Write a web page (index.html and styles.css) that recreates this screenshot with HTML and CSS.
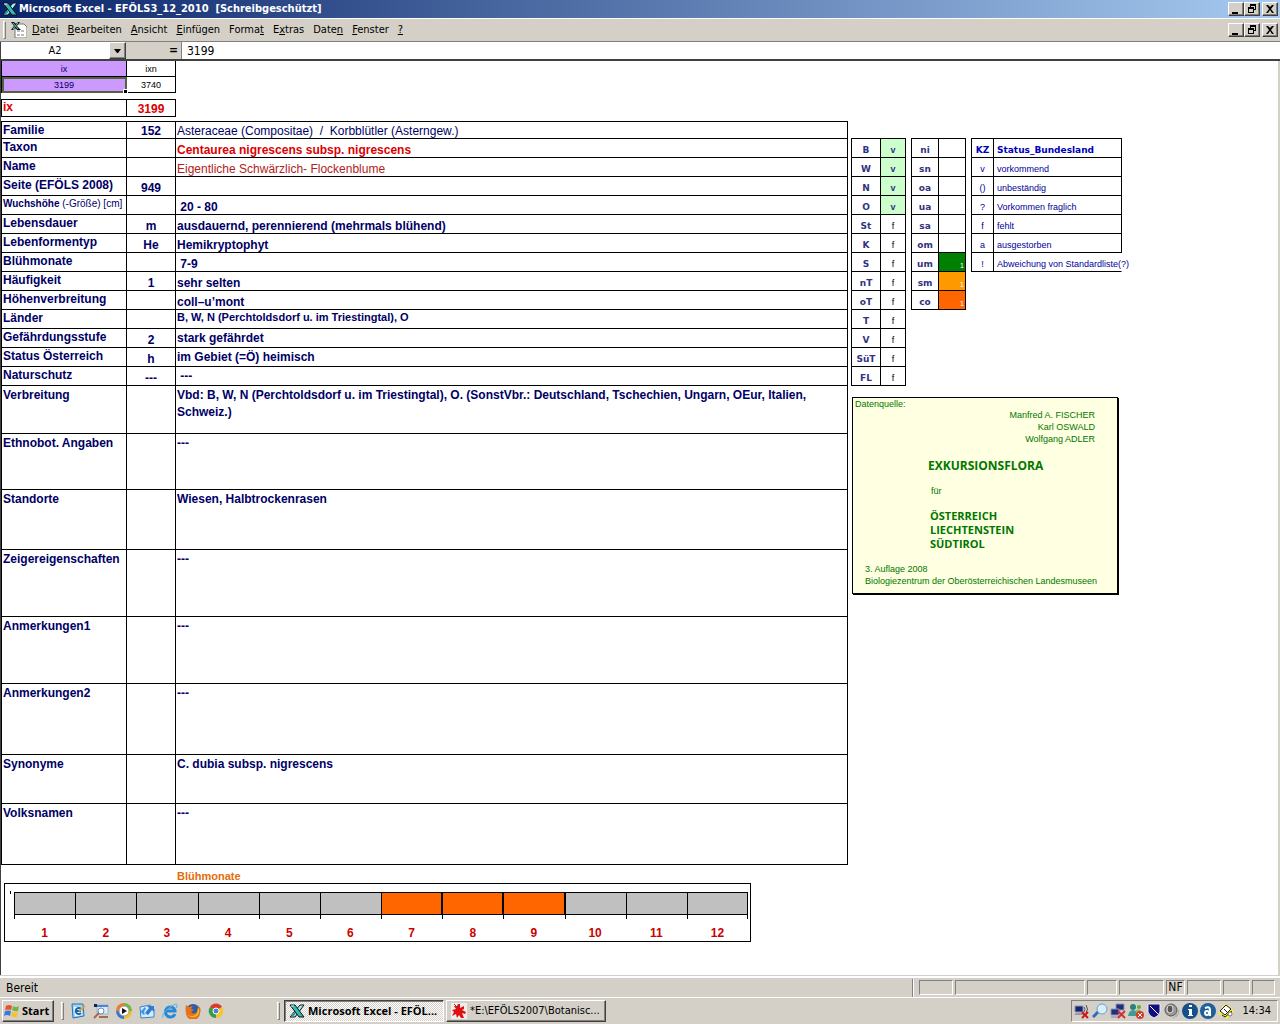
FILE: index.html
```
<!DOCTYPE html>

<html lang="de">
    <head>
        <meta charset="utf-8">
        <title>Microsoft Excel - EFÖLS3_12_2010</title>

        <link rel="stylesheet" href="styles.css">

    </head>

    <body>
        <svg class="defs" aria-hidden="true">
            <symbol id="excel" viewBox="0 0 16 16">
                <path d="M11 2h4L6 14H1z" fill="#a8ecec" stroke="#111"/>
                <path d="M1 2h5l9 12h-5z" fill="#35b8b8" stroke="#111"/>
                <path d="M2 3h3" stroke="#d9f7f7"/>
                <path d="M3 13l3-3" stroke="#1f9c9c" stroke-width="2"/>
            </symbol>
            <symbol id="min" viewBox="0 0 12 10">
                <path d="M2 8h6v2H2z"/>
            </symbol>
            <symbol id="restore" viewBox="0 0 12 10">
                <path d="M4 0h6v6H8V5h1V2H5v1H4zM2 3h6v6H2zM3 5v3h4V5z" fill-rule="evenodd"/>
            </symbol>
            <symbol id="close" viewBox="0 0 12 10">
                <path d="M2 1h2l2 2 2-2h2L7 5l3 4H8L6 6 4 9H2l3-4z"/>
            </symbol>
        </svg>

        <header class="titlebar">
            <svg class="icon"><use href="#excel"/></svg>
            <h1>Microsoft Excel - EFÖLS3_12_2010&nbsp; [Schreibgeschützt]</h1>
            <div class="winbuttons">
                <button aria-label="Minimieren"><svg><use href="#min"/></svg></button>
                <button aria-label="Wiederherstellen"><svg><use href="#restore"/></svg></button>
                <button aria-label="Schließen"><svg><use href="#close"/></svg></button>
            </div>
        </header>

        <nav class="menubar">
            <span class="grip"></span>
            <svg class="icon" viewBox="0 0 16 16">
                <path d="M4 2h9l3 3v11H4z" fill="#fff" stroke="#777"/>
                <path d="M6 8h3v2H6zm4 0h3v2h-3zm-4 4h3v2H6zm4 0h3v2h-3z" fill="#bbb"/>
                <path d="M0 0h3l2 2 2-2h2L6 4l4 4H6L4 6 2 8H0l3-4z" fill="#111"/>
                <path d="M2 1l5 6M7 1L2 7" stroke="#4cc" fill="none"/>
            </svg>
            <a href="#"><u>D</u>atei</a>
            <a href="#"><u>B</u>earbeiten</a>
            <a href="#"><u>A</u>nsicht</a>
            <a href="#"><u>E</u>infügen</a>
            <a href="#">Forma<u>t</u></a>
            <a href="#">E<u>x</u>tras</a>
            <a href="#">Date<u>n</u></a>
            <a href="#"><u>F</u>enster</a>
            <a href="#"><u>?</u></a>
            <div class="winbuttons">
                <button aria-label="Mappe minimieren"><svg><use href="#min"/></svg></button>
                <button aria-label="Mappe wiederherstellen"><svg><use href="#restore"/></svg></button>
                <button aria-label="Mappe schließen"><svg><use href="#close"/></svg></button>
            </div>
        </nav>

        <div class="formulabar">
            <input class="namebox" type="text" value="A2" aria-label="Namenfeld">
            <button class="drop" aria-label="Namen anzeigen"><svg viewBox="0 0 7 4"><path d="M0 0h7L4 4H3z"/></svg></button>
            <span class="equals">=</span>
            <input class="formula" type="text" value="3199" aria-label="Bearbeitungsleiste">
        </div>

        <main class="sheet">
            <section class="left">
                <table class="grid index">
                    <tr><td class="lilac">ix</td><td>ixn</td></tr>
                    <tr><td class="lilac active">3199<span class="handle"></span></td><td>3740</td></tr>
                </table>

                <table class="grid number">
                    <tr><th>ix</th><td>3199</td></tr>
                </table>

                <table class="grid data">
                    <colgroup><col class="c1"><col class="c2"><col></colgroup>
                    <tr class="first"><th>Familie</th><td>152</td><td class="plain">Asteraceae (Compositae)&nbsp; /&nbsp; Korbblütler (Asterngew.)</td></tr>
                    <tr><th>Taxon</th><td></td><td class="taxon">Centaurea nigrescens subsp. nigrescens</td></tr>
                    <tr><th>Name</th><td></td><td class="name">Eigentliche Schwärzlich- Flockenblume</td></tr>
                    <tr><th>Seite (EFÖLS 2008)</th><td>949</td><td></td></tr>
                    <tr><th class="size"><b>Wuchshöhe</b> (-Größe) [cm]</th><td></td><td>&nbsp;20 - 80</td></tr>
                    <tr><th>Lebensdauer</th><td>m</td><td>ausdauernd, perennierend (mehrmals blühend)</td></tr>
                    <tr><th>Lebenformentyp</th><td>He</td><td>Hemikryptophyt</td></tr>
                    <tr><th>Blühmonate</th><td></td><td>&nbsp;7-9</td></tr>
                    <tr><th>Häufigkeit</th><td>1</td><td>sehr selten</td></tr>
                    <tr><th>Höhenverbreitung</th><td></td><td>coll–u’mont</td></tr>
                    <tr><th>Länder</th><td></td><td class="states">B, W, N (Perchtoldsdorf u. im Triestingtal), O</td></tr>
                    <tr><th>Gefährdungsstufe</th><td>2</td><td class="mid">stark gefährdet</td></tr>
                    <tr><th>Status Österreich</th><td>h</td><td class="mid">im Gebiet (=Ö) heimisch</td></tr>
                    <tr><th>Naturschutz</th><td>---</td><td class="mid">&nbsp;---</td></tr>
                    <tr class="tall h48"><th>Verbreitung</th><td></td><td>Vbd: B, W, N (Perchtoldsdorf u. im Triestingtal), O. (SonstVbr.: Deutschland, Tschechien, Ungarn, OEur, Italien, Schweiz.)</td></tr>
                    <tr class="tall h56"><th>Ethnobot. Angaben</th><td></td><td>---</td></tr>
                    <tr class="tall h60"><th>Standorte</th><td></td><td>Wiesen, Halbtrockenrasen</td></tr>
                    <tr class="tall h67"><th>Zeigereigenschaften</th><td></td><td>---</td></tr>
                    <tr class="tall h67"><th>Anmerkungen1</th><td></td><td>---</td></tr>
                    <tr class="tall h71"><th>Anmerkungen2</th><td></td><td>---</td></tr>
                    <tr class="tall h49"><th>Synonyme</th><td></td><td>C. dubia subsp. nigrescens</td></tr>
                    <tr class="tall h61"><th>Volksnamen</th><td></td><td>---</td></tr>
                </table>

                <h2>Blühmonate</h2>
                <div class="chart">
                    <div class="month"><i></i>1</div>
                    <div class="month"><i></i>2</div>
                    <div class="month"><i></i>3</div>
                    <div class="month"><i></i>4</div>
                    <div class="month"><i></i>5</div>
                    <div class="month"><i></i>6</div>
                    <div class="month bloom"><i></i>7</div>
                    <div class="month bloom"><i></i>8</div>
                    <div class="month bloom"><i></i>9</div>
                    <div class="month"><i></i>10</div>
                    <div class="month"><i></i>11</div>
                    <div class="month"><i></i>12</div>
                </div>
            </section>

            <aside class="right">
                <div class="tables">
                    <table class="grid small lands">
                        <tr><th>B</th><td class="yes">v</td></tr>
                        <tr><th>W</th><td class="yes">v</td></tr>
                        <tr><th>N</th><td class="yes">v</td></tr>
                        <tr><th>O</th><td class="yes">v</td></tr>
                        <tr><th>St</th><td>f</td></tr>
                        <tr><th>K</th><td>f</td></tr>
                        <tr><th>S</th><td>f</td></tr>
                        <tr><th>nT</th><td>f</td></tr>
                        <tr><th>oT</th><td>f</td></tr>
                        <tr><th>T</th><td>f</td></tr>
                        <tr><th>V</th><td>f</td></tr>
                        <tr><th>SüT</th><td>f</td></tr>
                        <tr><th>FL</th><td>f</td></tr>
                    </table>

                    <table class="grid small levels">
                        <tr><th>ni</th><td></td></tr>
                        <tr><th>sn</th><td></td></tr>
                        <tr><th>oa</th><td></td></tr>
                        <tr><th>ua</th><td></td></tr>
                        <tr><th>sa</th><td></td></tr>
                        <tr><th>om</th><td></td></tr>
                        <tr><th>um</th><td class="green">1</td></tr>
                        <tr><th>sm</th><td class="amber">1</td></tr>
                        <tr><th>co</th><td class="orange">1</td></tr>
                    </table>

                    <table class="grid small legend">
                        <tr><th>KZ</th><th>Status_Bundesland</th></tr>
                        <tr><td>v</td><td>vorkommend</td></tr>
                        <tr><td>()</td><td>unbeständig</td></tr>
                        <tr><td>?</td><td>Vorkommen fraglich</td></tr>
                        <tr><td>f</td><td>fehlt</td></tr>
                        <tr><td>a</td><td>ausgestorben</td></tr>
                        <tr><td>!</td><td>Abweichung von Standardliste(?)</td></tr>
                    </table>
                </div>

                <div class="source">
                    <p class="caption">Datenquelle:</p>
                    <p class="authors">Manfred A. FISCHER<br>Karl OSWALD<br>Wolfgang ADLER</p>
                    <p class="flora">EXKURSIONSFLORA</p>
                    <p class="for">für</p>
                    <p class="countries">ÖSTERREICH<br>LIECHTENSTEIN<br>SÜDTIROL</p>
                    <p class="edition">3. Auflage 2008<br>Biologiezentrum der Oberösterreichischen Landesmuseen</p>
                </div>
            </aside>
        </main>

        <footer class="statusbar">
            <span class="ready">Bereit</span>
            <span class="divider"></span>
            <span class="panel w34"></span>
            <span class="panel w130"></span>
            <span class="panel w30"></span>
            <span class="panel w45"></span>
            <span class="panel w19">NF</span>
            <span class="panel w34"></span>
            <span class="panel w27"></span>
            <span class="panel w23"></span>
        </footer>

        <div class="taskbar">
            <button class="start">
                <svg class="icon" viewBox="0 0 16 16">
                    <path d="M2 3q3-2 6 0L7 7Q4 6 1 7z" fill="#e5532d"/>
                    <path d="M9 3q3 2 6 0l-1 5q-3 1-6-1z" fill="#6fb93c"/>
                    <path d="M1 8q3-1 6 0l-1 5q-3-2-6 0z" fill="#3d78d8"/>
                    <path d="M8 9q3 1 6 0l-1 5q-3 1-6-1z" fill="#f6c22c"/>
                </svg>
                Start
            </button>
            <span class="grip"></span>
            <div class="quick">
                <svg class="icon" viewBox="0 0 16 16">
                    <path d="M2 1h11l1 12-11 2z" fill="#9cd4f6" stroke="#2173b8"/>
                    <path d="M4 4h7l1 8-7 1z" fill="#fff"/>
                    <path d="M11 6a3 3 0 1 0 0 4M6 8h5" fill="none" stroke="#1767ad" stroke-width="2"/>
                    <path d="M9 8l6-5" stroke="#e0a13c" stroke-width="2"/>
                </svg>
                <svg class="icon" viewBox="0 0 16 16">
                    <path d="M4 2h11v9H4z" fill="#dcecfa" stroke="#8eb4dc"/>
                    <path d="M4 3h11" stroke="#4a87d0" stroke-width="2"/>
                    <path d="M1 1h3v3H1z" fill="#124"/>
                    <circle cx="8" cy="8" r="3" fill="#fff" stroke="#6b8ab0"/>
                    <path d="M6 10l-5 5M6 14h9" stroke="#a76a4c" stroke-width="2"/>
                </svg>
                <svg class="icon" viewBox="0 0 16 16">
                    <path d="M8 8V0a8 8 0 0 1 8 8z" fill="#6fb93c"/>
                    <path d="M8 8h8a8 8 0 0 1-8 8z" fill="#f3bd27"/>
                    <path d="M8 8v8a8 8 0 0 1-8-8z" fill="#3776cf"/>
                    <path d="M8 8H0a8 8 0 0 1 8-8z" fill="#ee7a2a"/>
                    <circle cx="8" cy="8" r="5" fill="#fff" stroke="#999"/>
                    <path d="M6 5l5 3-5 3z" fill="#111"/>
                </svg>
                <svg class="icon" viewBox="0 0 16 16">
                    <path d="M1 4l10-2 4 4v8L2 15z" fill="#d4ebfb" stroke="#3b83c4"/>
                    <path d="M15 3v6l-2-2-4 5-3-2 4-5-2-2z" fill="#2b7dd6"/>
                    <path d="M2 8l4-4 1 2q-3 2-1 6-4-1-4-4z" fill="#3f97e6"/>
                </svg>
                <svg class="icon" viewBox="0 0 16 16">
                    <path d="M13 11a5 5 0 1 1 0-4v1H5" fill="none" stroke="#2789d8" stroke-width="3"/>
                    <path d="M1 15Q-1 11 7 5t8-3q1 2-2 4" fill="none" stroke="#54b5ef"/>
                </svg>
                <svg class="icon" viewBox="0 0 16 16">
                    <circle cx="8" cy="8" r="7" fill="#2c5ea8"/>
                    <path d="M1 2l3 2 4-1-2 3 3 1-3 2q3 3 6 0t1-7q4 4 2 8a7 7 0 0 1-14 0Q0 6 1 2z" fill="#e8721c"/>
                    <path d="M13 4q3 5-1 9-5 3-9-1 6 3 9-2z" fill="#f8b42b"/>
                </svg>
                <svg class="icon" viewBox="0 0 16 16">
                    <path d="M8 8L2 4a7 7 0 0 1 12 0z" fill="#d93a2b"/>
                    <path d="M8 8l6-4a7 7 0 0 1-6 11z" fill="#f5c62c"/>
                    <path d="M8 8v7A7 7 0 0 1 2 4z" fill="#3a9c45"/>
                    <circle cx="8" cy="8" r="3" fill="#4284e8" stroke="#fff"/>
                </svg>
            </div>
            <span class="grip"></span>
            <button class="task pressed"><svg class="icon"><use href="#excel"/></svg>Microsoft Excel - EFÖL...</button>
            <button class="task">
                <svg class="icon" viewBox="0 0 16 16">
                    <path d="M0 0h16v16H0z" fill="#eee"/>
                    <path d="M7 1h2v4l4-2v3l-2 1 4 2-1 2-3-1 2 5h-3l-2-3-2 3-1-4-4 2 2-4-2-2 4-1-2-3h3z" fill="#e01010"/>
                    <path d="M3 1l3 3" stroke="#833"/>
                </svg>
                *E:\EFÖLS2007\Botanisc...
            </button>
            <div class="tray">
                <svg class="icon" viewBox="0 0 16 16">
                    <path d="M1 3h8v6H1z" fill="#16246c" stroke="#8a94b8"/>
                    <path d="M0 12l2-2h7l1 2z" fill="#99a"/>
                    <path d="M10 4q2 2 0 5M12 2q3 4 0 8" fill="none" stroke="#555"/>
                    <path d="M8 9l6 6M14 9l-6 6" stroke="#d01818" stroke-width="2"/>
                </svg>
                <svg class="icon" viewBox="0 0 16 16">
                    <path d="M1 14l6-6" stroke="#3266c8" stroke-width="3"/>
                    <circle cx="10" cy="6" r="5" fill="#d6effc" stroke="#6f9cc9"/>
                </svg>
                <svg class="icon" viewBox="0 0 16 16">
                    <path d="M6 1h8v6H6z" fill="#20307c" stroke="#8a94b8"/>
                    <path d="M1 6h8v6H1z" fill="#20307c" stroke="#8a94b8"/>
                    <path d="M1 14h8" stroke="#889"/>
                    <path d="M8 8l7 7M15 8l-7 7" stroke="#d83030" stroke-width="2"/>
                </svg>
                <svg class="icon" viewBox="0 0 16 16">
                    <circle cx="5" cy="4" r="3" fill="#2f7f7a"/>
                    <circle cx="11" cy="4" r="2" fill="#5fae3f"/>
                    <path d="M0 13q1-6 5-6t5 6z" fill="#3f9c96"/>
                    <path d="M8 7q5-2 6 4H9z" fill="#7cc04e"/>
                    <circle cx="12" cy="12" r="4" fill="#d83a2a"/>
                    <path d="M10 10l4 4M14 10l-4 4" stroke="#fff"/>
                </svg>
                <svg class="icon" viewBox="0 0 16 16">
                    <path d="M2 1h12v8q-1 4-6 6-5-2-6-6z" fill="#10107c" stroke="#e8e8f4"/>
                    <path d="M4 3l8 8" stroke="#fff"/>
                </svg>
                <svg class="icon" viewBox="0 0 16 16">
                    <ellipse cx="7" cy="7" rx="6" ry="6" fill="#999" stroke="#555"/>
                    <ellipse cx="6" cy="6" rx="3" ry="4" fill="#555" stroke="#ddd"/>
                    <path d="M12 14q3-3 3-7M9 15q3-1 4-4" fill="none" stroke="#9ab"/>
                </svg>
                <svg class="icon" viewBox="0 0 16 16">
                    <circle cx="8" cy="8" r="8" fill="#14508c"/>
                    <path d="M7 2h3v2H7zM6 6h4v6h1v1H6v-1h1V7H6z" fill="#fff"/>
                </svg>
                <svg class="icon" viewBox="0 0 16 16">
                    <circle cx="8" cy="8" r="8" fill="#1f5f9c"/>
                    <ellipse cx="7" cy="10" rx="2" ry="2" fill="none" stroke="#fff" stroke-width="2"/>
                    <path d="M5 5q5-2 5 2v6" fill="none" stroke="#fff" stroke-width="2"/>
                </svg>
                <svg class="icon" viewBox="0 0 16 16">
                    <path d="M8 0l8 8-7 8-9-6z" fill="#f4ee3c"/>
                    <path d="M2 8l6-6 5 4-6 6z" fill="#fff" stroke="#222"/>
                    <path d="M4 12l3 2 7-6M6 6l3 3" stroke="#222" fill="none"/>
                    <circle cx="12" cy="11" r="2" fill="#fff" stroke="#776"/>
                </svg>
                <time>14:34</time>
            </div>
        </div>
    </body>
</html>
```
FILE: styles.css
```
* {
    box-sizing: border-box;
}

body {
    margin: 0;
    min-height: 100vh;
    display: flex;
    flex-direction: column;
    background: #d4d0c8;
    color: #000;
    font: 11px/14px "DejaVu Sans Condensed", Tahoma, sans-serif;
}

h1, h2, p {
    margin: 0;
}

button, input {
    font: inherit;
    color: inherit;
    padding: 0;
    border: 0;
    border-radius: 0;
}

.defs {
    display: none;
}

.icon {
    width: 16px;
    height: 16px;
    flex: none;
}

/* title and menu */

.titlebar {
    display: flex;
    align-items: center;
    gap: 1px;
    height: 18px;
    padding: 0 2px;
    background: linear-gradient(to right, #0a246a, #a6caf0);
    color: #fff;
}

.titlebar h1 {
    font-size: 11px;
    line-height: 14px;
    white-space: nowrap;
}

.winbuttons {
    display: flex;
    margin-left: auto;
}

.winbuttons button {
    width: 16px;
    height: 14px;
    display: flex;
    justify-content: center;
    align-items: center;
    background: #d4d0c8;
    border: 1px solid;
    border-color: #fff #404040 #404040 #fff;
    box-shadow: inset -1px -1px #808080;
}

.winbuttons button:last-child {
    margin-left: 2px;
}

.winbuttons svg {
    width: 12px;
    height: 10px;
}

.menubar {
    display: flex;
    align-items: center;
    gap: 9px;
    height: 24px;
    padding: 0 2px 0 3px;
    border-top: 1px solid #fff;
    border-bottom: 1px solid #808080;
}

.menubar .icon {
    margin: 0 -4px;
}

.menubar a {
    color: #000;
    text-decoration: none;
}

.grip {
    width: 3px;
    height: 18px;
    border: 1px solid;
    border-color: #fff #808080 #808080 #fff;
}

.formulabar {
    display: flex;
    height: 19px;
    border-bottom: 2px solid #404040;
}

.namebox {
    width: 109px;
    border-left: 1px solid #404040;
    text-align: center;
    background: #fff;
}

.drop {
    width: 17px;
    background: #d4d0c8;
    border: 1px solid;
    border-color: #fff #404040 #404040 #fff;
    box-shadow: inset -1px -1px #808080;
}

.drop svg {
    width: 7px;
    height: 4px;
    display: block;
    margin: 0 auto;
}

.equals {
    width: 56px;
    padding-right: 3px;
    border-right: 1px solid #808080;
    text-align: right;
    font-size: 12px;
    font-weight: bold;
    line-height: 17px;
}

.formula {
    flex: 1;
    padding-left: 5px;
    background: #fff;
    font-size: 12px;
}

/* worksheet */

.sheet {
    flex: 1;
    display: flex;
    align-items: flex-start;
    margin-right: 1px;
    border-left: 1px solid #404040;
    border-right: 1px solid #d4d0c8;
    background: #fff;
    color: #000066;
    font: bold 12px/14px "Liberation Sans", Arial, sans-serif;
}

.left {
    flex: 1;
    min-width: 0;
}

.right {
    flex: none;
    width: 430px;
    padding: 77px 0 0 3px;
}

.grid {
    border-spacing: 0;
    border-top: 1px solid #000;
    border-left: 1px solid #000;
    table-layout: fixed;
}

.grid td, .grid th {
    height: 19px;
    padding: 0 1px;
    border-right: 1px solid #000;
    border-bottom: 1px solid #000;
    vertical-align: bottom;
}

.index, .number {
    width: 175px;
}

.index td:first-child, .number th {
    width: 125px;
}

.index {
    border-top: 0;
    color: #000;
    font: 9px/14px "Liberation Sans", Arial, sans-serif;
}

.index td {
    height: 16px;
    text-align: center;
    vertical-align: middle;
}

.index .lilac {
    background: #cc99ff;
    color: #000066;
}

.index .active {
    position: relative;
    outline: 2px solid #556044;
    outline-offset: -2px;
}

.handle {
    position: absolute;
    right: -2px;
    bottom: -2px;
    width: 5px;
    height: 5px;
    background: #000;
    border: 1px solid #fff;
}

.number {
    margin: 6px 0 4px;
    color: #dd0000;
}

.grid.number th, .grid.number td {
    height: 17px;
}

.grid.number th {
    text-align: left;
    vertical-align: top;
}

.number td {
    text-align: center;
}

.data {
    width: 100%;
}

.c1 {
    width: 125px;
}

.c2 {
    width: 49px;
}

.grid.data th {
    text-align: left;
    vertical-align: top;
    line-height: 16px;
    white-space: nowrap;
}

.data td:nth-child(2) {
    text-align: center;
}

.data .first td, .data .first th {
    height: 17px;
}

.data .plain, .data .name {
    font-weight: normal;
}

.data .taxon {
    color: #dd0000;
}

.data .name {
    color: #b22222;
}

.data .size {
    font-size: 10px;
    font-weight: normal;
}

.data .states {
    vertical-align: top;
    font-size: 11px;
}

.data .mid {
    vertical-align: middle;
}

.grid.data .tall th, .grid.data .tall td {
    padding-top: 1px;
    vertical-align: top;
    line-height: 17px;
}

.data .h48 td { height: 48px; }
.data .h49 td { height: 49px; }
.data .h56 td { height: 56px; }
.data .h60 td { height: 60px; }
.data .h61 td { height: 61px; }
.data .h67 td { height: 67px; }
.data .h71 td { height: 71px; }

h2 {
    margin: 4px 0 0 176px;
    color: #e46c0a;
    font-size: 11px;
    line-height: 14px;
}

.chart {
    position: relative;
    display: grid;
    grid-template-columns: repeat(12, 1fr);
    height: 59px;
    margin: 0 97px 0 3px;
    padding: 8px 2px 0 9px;
    border: 1px solid #000;
    color: #cc0000;
    text-align: center;
}

/* stub of the hidden value axis */
.chart::before {
    content: "";
    position: absolute;
    left: 5px;
    top: 7px;
    width: 1px;
    height: 3px;
    background: #000;
}

.month i {
    display: block;
    height: 27px;
    margin-bottom: 7px;
    border-left: 1px solid #000;
    background: linear-gradient(#000 1px, #c0c0c0 1px, #c0c0c0 22px, #000 22px, #000 23px, transparent 23px);
}

.month:last-child i {
    border-right: 1px solid #000;
}

.bloom i {
    background: linear-gradient(#000 1px, #ff6600 1px, #ff6600 22px, #000 22px, #000 23px, transparent 23px);
}

.bloom i::after {
    content: "";
    display: block;
    height: 23px;
    border-right: 1px solid #000;
}

/* side tables */

.tables {
    display: flex;
    align-items: flex-start;
    gap: 5px;
}

.small {
    font-size: 9px;
    line-height: 14px;
}

.small td, .small th {
    padding: 0;
    text-align: center;
    white-space: nowrap;
}

.small th {
    color: #333380;
    font-family: "DejaVu Sans", Verdana, sans-serif;
}

.small td {
    font-weight: normal;
}

.lands {
    width: 55px;
    color: #000;
}

.lands th {
    width: 29px;
}

.lands .yes {
    background: #ccffcc;
    color: #333380;
    font-weight: bold;
}

.levels {
    width: 55px;
}

.levels th {
    width: 27px;
}

.levels td {
    padding-right: 1px;
    color: #fff;
    font-size: 7px;
    line-height: 10px;
    text-align: right;
}

.green { background: #008000; }
.amber { background: #ff9900; }
.orange { background: #ff6600; }

.legend {
    width: 151px;
    color: #000099;
}

.legend th {
    color: #0000bb;
}

.legend th:first-child {
    width: 22px;
}

.legend tr > :last-child {
    padding-left: 3px;
    text-align: left;
}

.legend tr:last-child td:last-child {
    border-right-color: transparent;
}

.source {
    width: 266px;
    margin: 11px 0 0 1px;
    padding: 1px 2px 6px;
    border: 1px solid #000;
    box-shadow: 1px 1px #000;
    background: #ffffe1;
    color: #007700;
    font: 9px/12px "Liberation Sans", Arial, sans-serif;
}

.caption {
    line-height: 10px;
}

.authors {
    margin-right: 20px;
    text-align: right;
}

.flora {
    margin: 13px 0 11px 73px;
    font: bold 12px/16px "Open Sans", Tahoma, sans-serif;
}

.for {
    margin-left: 76px;
}

.countries {
    margin: 12px 0 12px 75px;
    font: bold 11px/14px "Open Sans", Tahoma, sans-serif;
}

.edition {
    margin-left: 10px;
    white-space: nowrap;
}

/* status bar and taskbar */

.statusbar {
    display: flex;
    align-items: center;
    gap: 2px;
    height: 22px;
    padding: 3px 5px 1px 6px;
    border-top: 1px solid #d4d0c8;
    box-shadow: inset 0 2px #fff;
    font-size: 12px;
}

.ready {
    flex: 1;
}

.divider {
    width: 2px;
    height: 18px;
    margin-right: 3px;
    border-left: 1px solid #808080;
    border-right: 1px solid #fff;
}

.panel {
    height: 15px;
    border: 1px solid;
    border-color: #808080 #fff #fff #808080;
    line-height: 13px;
    text-align: center;
}

.w19 { width: 19px; }
.w23 { width: 23px; }
.w27 { width: 27px; }
.w30 { width: 30px; }
.w34 { width: 34px; }
.w45 { width: 45px; }
.w130 { width: 130px; }

.taskbar {
    display: flex;
    align-items: center;
    height: 27px;
    padding: 0 2px;
    border-top: 1px solid #fff;
}

.start, .task {
    display: flex;
    align-items: center;
    height: 22px;
    background: #d4d0c8;
    border: 1px solid;
    border-color: #fff #404040 #404040 #fff;
    box-shadow: inset -1px -1px #808080;
    white-space: nowrap;
}

.start {
    gap: 2px;
    width: 52px;
    margin-right: 7px;
    padding-left: 1px;
    font: bold 11px/14px "Open Sans", Tahoma, sans-serif;
}

.quick {
    display: flex;
    gap: 7px;
    width: 207px;
    margin-left: 6px;
}

.task {
    width: 160px;
    gap: 3px;
    margin-left: 2px;
    padding-left: 4px;
    overflow: hidden;
}

.grip + .task {
    margin-left: 4px;
}

.pressed {
    border-color: #404040 #fff #fff #404040;
    box-shadow: inset 1px 1px #808080;
    background: repeating-conic-gradient(#fff 0 25%, #d4d0c8 0 50%) 0 0 / 2px 2px;
    font: bold 11px/14px "Open Sans", Tahoma, sans-serif;
}

.tray {
    display: flex;
    align-items: center;
    gap: 2px;
    height: 22px;
    margin-left: auto;
    padding: 0 6px 0 2px;
    border: 1px solid;
    border-color: #808080 #fff #fff #808080;
}

.tray time {
    margin-left: 6px;
}
```
